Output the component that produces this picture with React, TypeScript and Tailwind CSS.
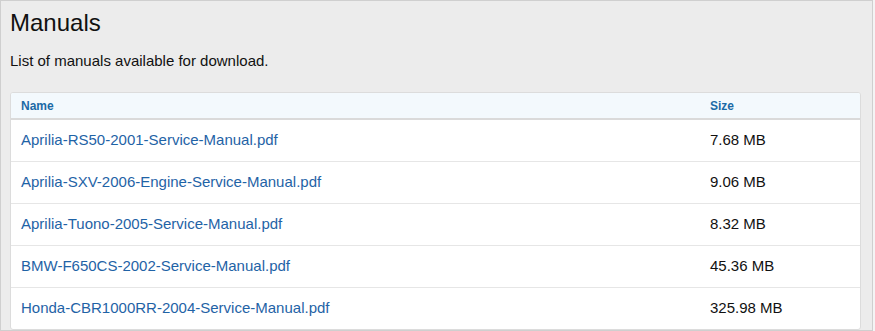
import React from "react";

const rows = [
  ["Aprilia-RS50-2001-Service-Manual.pdf", "7.68 MB"],
  ["Aprilia-SXV-2006-Engine-Service-Manual.pdf", "9.06 MB"],
  ["Aprilia-Tuono-2005-Service-Manual.pdf", "8.32 MB"],
  ["BMW-F650CS-2002-Service-Manual.pdf", "45.36 MB"],
  ["Honda-CBR1000RR-2004-Service-Manual.pdf", "325.98 MB"],
];

export default function App() {
  return (
    <div className="w-[875px] h-[331px] bg-[#f4f4f4] overflow-hidden" style={{ fontFamily: '"Liberation Sans", Arial, sans-serif' }}>
      <div className="w-[873px] h-[331px] bg-[#ececec] border border-[#cfcfcf] pl-[9px] pr-[11px] pt-[5px]">
        <h1 className="text-[24px] leading-[34px] text-[#111] m-0 font-normal">Manuals</h1>
        <p className="text-[15px] leading-[18px] text-[#111] mt-[12px]">List of manuals available for download.</p>
        <div className="mt-[22px] bg-white border border-[#dcdcdc] rounded-[3px] overflow-hidden">
          <div className="flex h-[27px] items-center bg-[#f3f9fd] border-b-2 border-[#dadada] text-[12px] font-bold text-[#1b6aa6]">
            <div className="w-[699px] pl-[10px]">Name</div>
            <div>Size</div>
          </div>
          {rows.map(([name, size], i) => (
            <div key={name} className={`flex items-center text-[15px] ${i < rows.length - 1 ? "h-[42px] border-b border-[#e6e6e6]" : "h-[41px]"}`}>
              <div className="w-[699px] pl-[10px]">
                <a href="#" className="text-[#1f63a6]">{name}</a>
              </div>
              <div className="text-[#111]">{size}</div>
            </div>
          ))}
        </div>
      </div>
    </div>
  );
}
